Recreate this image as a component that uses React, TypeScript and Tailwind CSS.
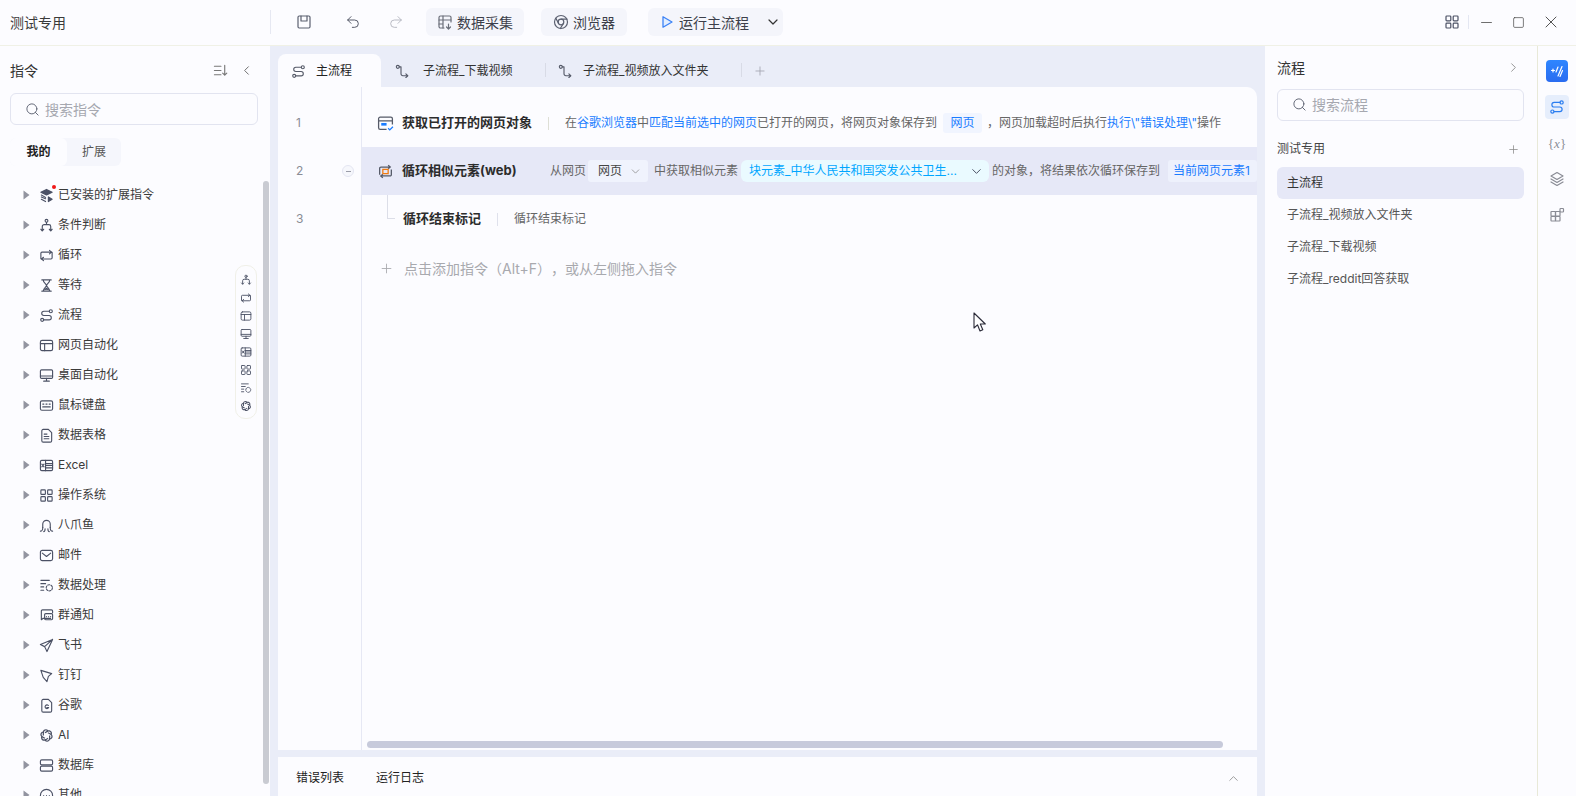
import React from "react";
import { Search, Plus, ChevronDown, ChevronLeft, ChevronRight, ChevronUp, Minus, Square, X, Undo2, Redo2 } from "lucide-react";
import { RiOpenaiLine } from "react-icons/ri";

const font = "font-['Inter','Noto_Sans_CJK_SC',sans-serif]";

type P = { name: string; size?: number; color?: string; className?: string };

function Ico({ name, size = 16, color = "#4b5165", className = "" }: P) {
  if (name === "ai") return <RiOpenaiLine size={size} color={color} className={`shrink-0 ${className}`} />;
  const c: Record<string, React.ReactNode> = {
    flow: (<><circle cx="12.6" cy="3.4" r="1.6" /><circle cx="3.4" cy="12.6" r="1.6" /><path d="M11 3.4H5.2a2.3 2.3 0 0 0 0 4.6h5.6a2.3 2.3 0 0 1 0 4.6H5" /></>),
    sub: (<><circle cx="3" cy="3" r="1.6" /><path d="M4.6 3H6.4V10.5A2 2 0 0 0 8.4 12.5H13.5" /><path d="M11.6 10.6l2 1.9-2 1.9" /></>),
    branch: (<><circle cx="8" cy="3" r="1.5" /><path d="M8 4.5V7M3.5 13.5V9a2 2 0 0 1 2-2h5a2 2 0 0 1 2 2v4.5" /><path d="M2 12l1.5 1.6L5 12M11 12l1.5 1.6L14 12" /></>),
    loop: (<><path d="M3 11.5H2V5.6a1.2 1.2 0 0 1 1.2-1.2H13" /><path d="M11.2 2.6 13.2 4.4 11.2 6.2" /><path d="M13 4.6h1v5.9a1.2 1.2 0 0 1-1.2 1.2H3" /><path d="M4.8 9.9 2.8 11.7 4.8 13.5" /></>),
    hour: (<><path d="M3 2h10M3 14h10M4.5 2c0 3 3.5 4.5 3.5 6S4.5 11 4.5 14M11.5 2c0 3-3.5 4.5-3.5 6s3.5 3 3.5 6" /><path d="M6 12.5 8 11l2 1.5" fill="currentColor" /></>),
    web: (<><rect x="1.5" y="2.5" width="13" height="11" rx="1.8" /><path d="M1.5 6h13M6 6v7.5" /></>),
    desk: (<><rect x="1.5" y="2" width="13" height="9" rx="1.2" /><path d="M1.5 8.5h13M8 11v3M5 14h6" /></>),
    kbd: (<><rect x="1.5" y="3" width="13" height="10" rx="1.6" /><path d="M4 6.5h1.2M7.4 6.5h1.2M10.8 6.5H12M4 9.5h8" /></>),
    doc: (<><path d="M3 3a1.5 1.5 0 0 1 1.5-1.5H10L13.5 5v8.5A1.5 1.5 0 0 1 12 15H4.5A1.5 1.5 0 0 1 3 13.5z" /><path d="M5.5 6.5h3M5.5 9h5M5.5 11.5h5" /></>),
    excel: (<><rect x="1.5" y="2.5" width="13" height="11" rx="1.4" /><path d="M7 2.5v11M7 6h7.5M7 8h7.5M7 10.5h7.5" /><path d="M3 6.5 5.4 9.5M5.4 6.5 3 9.5" /></>),
    apps: (<><rect x="2" y="2" width="4.8" height="4.8" rx=".8" /><rect x="9.2" y="2" width="4.8" height="4.8" rx=".8" /><rect x="2" y="9.2" width="4.8" height="4.8" rx=".8" /><rect x="9.2" y="9.2" width="4.8" height="4.8" rx=".8" /></>),
    octo: (<><path d="M4 10V6.5a4 4 0 0 1 8 0V10" /><path d="M1.5 14c1.5 0 2.5-1.5 2.5-4M14.5 14c-1.5 0-2.5-1.5-2.5-4M5 14.5c1 0 1.5-1 1.5-3M11 14.5c-1 0-1.5-1-1.5-3" /></>),
    mail: (<><rect x="1.5" y="2.5" width="13" height="11" rx="2" /><path d="M3.5 5.5 8 9l4.5-3.5" /></>),
    data: (<><path d="M2 2.5h9M2 6h5M2 9.5h3M2 13h3" /><circle cx="11" cy="10.5" r="3.3" strokeDasharray="2 1.4" /></>),
    notify: (<><path d="M12.5 11H4.5L2.5 12.5V3.2A1.2 1.2 0 0 1 3.7 2h9.6a1.2 1.2 0 0 1 1.2 1.2V5" /><rect x="6" y="6" width="8.5" height="6.5" rx="1.2" /><path d="M8 9.2h.01M10.2 9.2h.01M12.4 9.2h.01" /></>),
    send: (<path d="M14.5 1.5 1.5 7l4.5 2.2L8.5 14.5zM14.5 1.5 6 9.2" />),
    ding: (<path d="M2 2.5 13.5 6 10 9l-1.5 5.5L4.5 10z" />),
    gdoc: (<><path d="M3 3a1.5 1.5 0 0 1 1.5-1.5H10L13.5 5v8.5A1.5 1.5 0 0 1 12 15H4.5A1.5 1.5 0 0 1 3 13.5z" /><path d="M10 8a2 2 0 1 0 .3 2.2H8.4" /></>),
    db: (<><rect x="1.500" y="2" width="13" height="5.300" rx="1.400" /><rect x="1.500" y="8.700" width="13" height="5.300" rx="1.400" /></>),
    chat: (<><circle cx="8" cy="8" r="6.500" /><path d="M5 8h.01M8 8h.01M11 8h.01" /></>),
    ext: (<><path d="M8 1.500 14 4.500 8 7.500 2 4.500z" fill="currentColor" /><path d="M2.500 7.500 7 10M7 11.500 2.500 9.500M2.500 12 7 14.500" /><path d="M10 9.500v5l4-2.500z" fill="currentColor" /></>),
    layers: (<><path d="M8 1.500 14 5 8 8.500 2 5z" /><path d="M2 8l6 3.500L14 8M2 11l6 3.500 6-3.500" /></>),
    widgets: (<><rect x="2" y="4.500" width="4.500" height="4.500" rx=".5" /><rect x="6.500" y="4.500" width="4.500" height="4.500" rx=".5" /><rect x="2" y="9.500" width="4.500" height="4.500" rx=".5" /><rect x="6.500" y="9.500" width="4.500" height="4.500" rx=".5" /><rect x="11" y="1.500" width="3.500" height="3.500" rx=".7" /></>),
    collect: (<><path d="M7 14H3.500A1.500 1.500 0 0 1 2 12.500v-9A1.500 1.500 0 0 1 3.500 2h9A1.500 1.500 0 0 1 14 3.500V8" /><path d="M6 2v12M2 6h12M2 10h4" /><path d="M11.500 10v5M9.500 13l2 2 2-2" /></>),
    chrome: (<><circle cx="8" cy="8" r="6.500" /><circle cx="8" cy="8" r="2.800" /><path d="M8 5.200h6M5.600 9.400 2.800 4.300M10.400 9.400 7.300 14.500" /></>),
    save: (<><rect x="2" y="2" width="12" height="12" rx="1.200" /><path d="M5 2v5h6V2" /></>),
    sort: (<><path d="M1.500 3.500h7M1.500 8h7M1.500 12.500h7M12.500 2.500v10.500M10.300 10.800l2.200 2.200 2.200-2.200" /></>),
  };
  return (
    <svg width={size} height={size} viewBox="0 0 16 16" fill="none" stroke={color} strokeWidth={1.2} strokeLinecap="round" strokeLinejoin="round" className={`shrink-0 ${className}`} style={{ color }}>
      {c[name]}
    </svg>
  );
}

const tree: [string, string][] = [
  ["ext", "已安装的扩展指令"], ["branch", "条件判断"], ["loop", "循环"], ["hour", "等待"], ["flow", "流程"],
  ["web", "网页自动化"], ["desk", "桌面自动化"], ["kbd", "鼠标键盘"], ["doc", "数据表格"], ["excel", "Excel"],
  ["apps", "操作系统"], ["octo", "八爪鱼"], ["mail", "邮件"], ["data", "数据处理"], ["notify", "群通知"],
  ["send", "飞书"], ["ding", "钉钉"], ["gdoc", "谷歌"], ["ai", "AI"], ["db", "数据库"], ["chat", "其他"],
];

function Header() {
  return (
    <header className="flex h-[46px] shrink-0 items-center border-b border-[#f0f1e6] bg-[#fcfcff] pb-[1px]">
      <div className="w-[270px] pl-[10px] text-[14px] text-[#3a3a3a]">测试专用</div>
      <div className="h-[24px] w-px bg-[#e6e8f2]" />
      <Ico name="save" size={16} color="#5b6070" className="ml-[25px]" />
      <Undo2 size={16} strokeWidth={1.4} color="#4b5060" className="ml-[33px]" />
      <Redo2 size={16} strokeWidth={1.4} color="#b4b6bf" className="ml-[27px]" />
      <div className="ml-[22px] flex h-[28px] w-[98px] shrink-0 items-center justify-center gap-[4px] whitespace-nowrap rounded-[6px] bg-[#f4f5fb] text-[14px] text-[#3c3f4a]">
        <Ico name="collect" color="#6b6f7a" />数据采集
      </div>
      <div className="ml-[17px] flex h-[28px] w-[86px] shrink-0 items-center justify-center gap-[4px] whitespace-nowrap rounded-[6px] bg-[#f4f5fb] text-[14px] text-[#3c3f4a]">
        <Ico name="chrome" color="#5b6070" />浏览器
      </div>
      <div className="ml-[21px] flex h-[28px] w-[135px] shrink-0 items-center whitespace-nowrap rounded-[6px] bg-[#f4f5fb] pl-[12px] text-[14px] text-[#3c3f4a]">
        <svg width="14" height="14" viewBox="0 0 14 14" fill="#e3eeff" stroke="#3b82f6" strokeWidth="1.300" strokeLinejoin="round" className="mr-[5px] shrink-0"><path d="M3 1.800v10.400L12 7z" /></svg>
        运行主流程
        <ChevronDown size={16} strokeWidth={1.800} color="#333" className="ml-[16px]" />
      </div>
      <div className="flex-1" />
      <Ico name="apps" size={16} color="#4b5165" />
      <div className="ml-[8px] h-[14px] w-px bg-[#e4e7f2]" />
      <Minus size={17} strokeWidth={1.100} color="#444" className="ml-[9px]" />
      <Square size={13} strokeWidth={1.300} color="#444" className="ml-[17px] rounded-[1px]" />
      <X size={20} strokeWidth={1.100} color="#444" className="ml-[16px] mr-[15px]" />
    </header>
  );
}

function Left() {
  return (
    <aside className="relative flex w-[270px] shrink-0 flex-col overflow-hidden bg-[#fcfcff]">
      <div className="flex h-[47px] shrink-0 items-center justify-between pl-[10px] pr-[16px] pt-[2px] text-[14px] text-[#333]">
        <span>指令</span>
        <div className="flex items-center gap-[11px]">
          <Ico name="sort" size={15} color="#777" />
          <ChevronLeft size={15} strokeWidth={1.500} color="#666" />
        </div>
      </div>
      <div className="ml-[10px] flex h-[32px] w-[248px] shrink-0 items-center rounded-[6px] border border-[#e2e4f0] pl-[14px] text-[14px] text-[#a6a8b0]">
        <Search size={15} strokeWidth={1.500} color="#5b6070" className="mr-[5px]" />搜索指令
      </div>
      <div className="ml-[10px] mt-[13px] flex h-[28px] w-[111px] shrink-0 rounded-[6px] bg-[#f5f6fc] text-[12px]">
        <div className="flex w-[57px] items-center justify-center rounded-[6px] bg-[#fcfcff] font-bold text-[#222]">我的</div>
        <div className="flex flex-1 items-center justify-center text-[#555]">扩展</div>
      </div>
      <div className="mt-[14px] flex flex-col">
        {tree.map(([ic, t], i) => (
          <div key={t} className="flex h-[30px] shrink-0 items-center pl-[23px] text-[12px] text-[#3a3a3a]">
            <svg width="7" height="10" viewBox="0 0 7 10" className="mr-[9px] shrink-0"><path d="M.5.500 6.500 5 .5 9.500z" fill="#9294a0" /></svg>
            <span className="relative mr-[4px] flex">
              <Ico name={ic} size={15} />
              {i === 0 && <span className="absolute -right-[2px] -top-[3px] h-[4px] w-[4px] rounded-full bg-[#f01818]" />}
            </span>
            {t}
          </div>
        ))}
      </div>
      <div className="absolute left-[235px] top-[219px] flex h-[154px] w-[22px] flex-col items-center gap-[6px] rounded-[10px] border border-[#f0f0e8] bg-[#fcfcff] pt-[8px]">
        {["branch", "loop", "web", "desk", "excel", "apps", "data", "ai"].map((n) => (
          <Ico key={n} name={n} size={12} />
        ))}
      </div>
      <div className="absolute left-[263px] top-[135px] h-[603px] w-[6px] rounded-[3px] bg-[#c9cbd2]" />
    </aside>
  );
}

function Chip({ children, className = "" }: { children: React.ReactNode; className?: string }) {
  return <span className={`flex h-[20px] shrink-0 items-center rounded-[3px] ${className}`}>{children}</span>;
}

const blue = "text-[#1a7cff]";

function Center() {
  return (
    <main className="relative flex min-w-0 flex-1 flex-col bg-[#eaedf8] px-[8px]">
      <div className="flex h-[41px] shrink-0 items-end whitespace-nowrap text-[12px] text-[#333]">
        <div className="flex h-[33px] w-[103px] items-center rounded-t-[8px] bg-[#fcfcff] pl-[13px] pt-[1px] text-[#222]">
          <Ico name="flow" size={15} color="#555a68" className="mr-[10px]" />主流程
        </div>
        <div className="flex h-[33px] w-[164px] items-center pl-[14px] pt-[1px]">
          <Ico name="sub" size={15} color="#555a68" className="mr-[13px]" />子流程_下载视频
        </div>
        <div className="h-[14px] w-px -translate-y-[10px] bg-[#d8dbe6]" />
        <div className="flex h-[33px] w-[195px] items-center pl-[12px] pt-[1px]">
          <Ico name="sub" size={15} color="#555a68" className="mr-[10px]" />子流程_视频放入文件夹
        </div>
        <div className="h-[14px] w-px -translate-y-[10px] bg-[#d8dbe6]" />
        <div className="flex h-[33px] items-center pl-[11px] pt-[1px]">
          <Plus size={14} strokeWidth={1.400} color="#a0a2ad" />
        </div>
      </div>

      <div className="relative flex min-h-0 flex-1 rounded-tr-[10px] bg-[#fcfcff]">
        <div className="flex w-[84px] shrink-0 flex-col border-r border-[#e6e8f4] pt-[12px] text-[12px] text-[#8a8c95]">
          <div className="flex h-[48px] items-center pl-[18px]">1</div>
          <div className="relative flex h-[48px] items-center pl-[18px]">
            2
            <span className="ml-auto mr-[7px] flex h-[12px] w-[12px] items-center justify-center rounded-full border border-[#e4e6f2] bg-[#f6f7fc]">
              <span className="h-px w-[5px] bg-[#9a9ca8]" />
            </span>
          </div>
          <div className="flex h-[48px] items-center pl-[18px]">3</div>
        </div>
        <div className="min-w-0 flex-1 overflow-hidden pt-[12px] text-[12px] text-[#666]">
          <div className="flex h-[48px] items-center whitespace-nowrap pl-[15px]">
            <svg width="17" height="17" viewBox="0 0 16 16" fill="none" stroke="#555a68" strokeWidth="1.200" className="mr-[8px] shrink-0"><path d="M9 13.500H3A1.500 1.500 0 0 1 1.500 12V3.500A1.500 1.500 0 0 1 3 2h10a1.500 1.500 0 0 1 1.500 1.500V9M1.500 5.500h13" /><rect x="4" y="7.500" width="5" height="2.500" fill="#1a7cff" stroke="none" /><path d="M10.500 12.500l1.500 1.500 3-3" stroke="#1a7cff" /></svg>
            <span className="w-[146px] shrink-0 text-[13px] font-bold text-[#2c2c2c]">获取已打开的网页对象</span>
            <span className="h-[13px] w-px shrink-0 bg-[#dedfd6]" />
            <span className="ml-[16px]">在<span className={blue}>谷歌浏览器</span>中<span className={blue}>匹配当前选中的网页</span>已打开的网页，将网页对象保存到</span>
            <Chip className={`ml-[6px] w-[39px] justify-center bg-[#f1f5ff] ${blue}`}>网页</Chip>
            <span className="ml-[5px]">，网页加载超时后执行<span className={blue}>执行\"错误处理\"</span>操作</span>
          </div>
          <div className="flex h-[48px] items-center whitespace-nowrap bg-[#e6e8f7] pl-[15px]">
            <svg width="17" height="17" viewBox="0 0 16 16" fill="none" stroke="#555a68" strokeWidth="1.200" className="mr-[8px] shrink-0"><path d="M2.500 11V5a1.200 1.200 0 0 1 1.200-1.200H12M10.500 2 12.500 3.800 10.500 5.500M13.500 6v5a1.200 1.200 0 0 1-1.200 1.200H4M5.500 10.500 3.500 12.200 5.500 14" /><rect x="5.500" y="6" width="5" height="4" stroke="#f07a10" /></svg>
            <span className="w-[148px] shrink-0 text-[13px] font-bold text-[#2c2c2c]">循环相似元素(web)</span>
            <span>从网页</span>
            <Chip className="ml-[2px] h-[22px] w-[60px] bg-[#f0f3fd] pl-[10px] text-[#444]">网页<ChevronDown size={13} strokeWidth={1.400} color="#888" className="ml-[7px]" /></Chip>
            <span className="ml-[6px]">中获取相似元素</span>
            <Chip className="ml-[3px] h-[22px] w-[248px] rounded-[6px] bg-[#eafaff] pl-[8px] text-[#00a6ff]">
              块元素_中华人民共和国突发公共卫生...<ChevronDown size={15} strokeWidth={1.600} color="#4b5165" className="ml-[12px]" />
            </Chip>
            <span className="ml-[3px]">的对象，将结果依次循环保存到</span>
            <Chip className={`ml-[8px] h-[22px] flex-1 bg-[#eef1fc] pl-[5px] ${blue}`}>当前网页元素1</Chip>
          </div>
          <div className="relative flex h-[48px] items-center whitespace-nowrap pl-[41px]">
            <span className="absolute left-[25px] top-0 h-[24px] w-[8px] border-b border-l border-[#dcdee8]" />
            <span className="w-[94px] shrink-0 text-[13px] font-bold text-[#2c2c2c]">循环结束标记</span>
            <span className="h-[13px] w-px shrink-0 bg-[#dfe1ec]" />
            <span className="ml-[16px]">循环结束标记</span>
          </div>
          <div className="flex h-[50px] items-center pl-[17px] text-[14px] text-[#a8a9ae]">
            <Plus size={15} strokeWidth={1.400} color="#a8a9ae" className="mr-[10px]" />点击添加指令（Alt+F），或从左侧拖入指令
          </div>
        </div>
        <div className="absolute bottom-[2px] left-[89px] h-[7px] w-[856px] rounded-[4px] bg-[#c7cadb]" />
      </div>

      <div className="mt-[7px] flex h-[39px] shrink-0 items-center justify-between bg-[#fcfcff] pl-[18px] pr-[16px] pt-[3px] text-[12px] text-[#222]">
        <div className="flex gap-[32px]"><span>错误列表</span><span>运行日志</span></div>
        <ChevronUp size={15} strokeWidth={1.300} color="#888" />
      </div>
    </main>
  );
}

function Right() {
  return (
    <aside className="flex w-[273px] shrink-0 flex-col border-r border-[#e8e9d8] bg-[#fcfcff] pl-[12px] pr-[13px]">
      <div className="flex h-[43px] shrink-0 items-center justify-between text-[14px] text-[#333]">
        <span>流程</span><ChevronRight size={15} strokeWidth={1.400} color="#888" className="mr-[3px]" />
      </div>
      <div className="flex h-[32px] shrink-0 items-center rounded-[6px] border border-[#e2e4f0] pb-[1px] pl-[14px] text-[14px] text-[#a6a8b0]">
        <Search size={15} strokeWidth={1.500} color="#5b6070" className="mr-[5px]" />搜索流程
      </div>
      <div className="flex h-[46px] shrink-0 items-center justify-between pt-[10px] text-[12px] text-[#444]">
        <span>测试专用</span><Plus size={13} strokeWidth={1.400} color="#888" className="mr-[4px]" />
      </div>
      <div className="flex flex-col text-[12px] text-[#555]">
        <div className="flex h-[32px] items-center rounded-[6px] bg-[#e6e8f7] pl-[10px] text-[#333]">主流程</div>
        <div className="flex h-[32px] items-center pl-[10px]">子流程_视频放入文件夹</div>
        <div className="flex h-[32px] items-center pl-[10px]">子流程_下载视频</div>
        <div className="flex h-[32px] items-center pl-[10px]">子流程_reddit回答获取</div>
      </div>
    </aside>
  );
}

function Rail() {
  return (
    <aside className="flex w-[38px] shrink-0 flex-col items-center bg-[#fcfcff] pt-[14px]">
      <div className="flex h-[22px] w-[22px] items-center justify-center rounded-[4px] bg-gradient-to-b from-[#2e86ff] to-[#2a6cf0]">
        <svg width="14" height="14" viewBox="0 0 14 14" fill="none" stroke="#fff" strokeWidth="1.200" strokeLinecap="round"><path d="M1.500 6.500h3M3 5v3M8 12l4-9.500M10 12.500l2.500-6" /><path d="M8 3 6 8" /></svg>
      </div>
      <div className="mt-[13px] flex h-[24px] w-[24px] items-center justify-center rounded-[4px] bg-[#e6eefc]">
        <Ico name="flow" size={16} color="#2a7df0" />
      </div>
      <div className="mt-[13px] flex h-[24px] items-center font-['Liberation_Serif',serif] text-[13px] text-[#8a8c95]">{"{"}<i>x</i>{"}"}</div>
      <div className="mt-[15px]"><Ico name="layers" size={16} color="#8a8c95" /></div>
      <div className="mt-[20px]"><Ico name="widgets" size={16} color="#8a8c95" /></div>
    </aside>
  );
}

export default function App() {
  return (
    <div className={`relative flex h-[796px] w-[1576px] flex-col overflow-hidden bg-[#fcfcff] [text-spacing-trim:space-all] ${font}`}>
      <Header />
      <div className="flex min-h-0 flex-1">
        <Left />
        <Center />
        <Right />
        <Rail />
      </div>
      <svg width="14" height="21" viewBox="0 0 14 21" className="absolute left-[973px] top-[312px]" fill="#fff" stroke="#2a2a38" strokeWidth="1.100" strokeLinejoin="round"><path d="M1 1v15l3.500-3.200L7 19l2.800-1.200-2.500-5.800h5z" /></svg>
    </div>
  );
}
